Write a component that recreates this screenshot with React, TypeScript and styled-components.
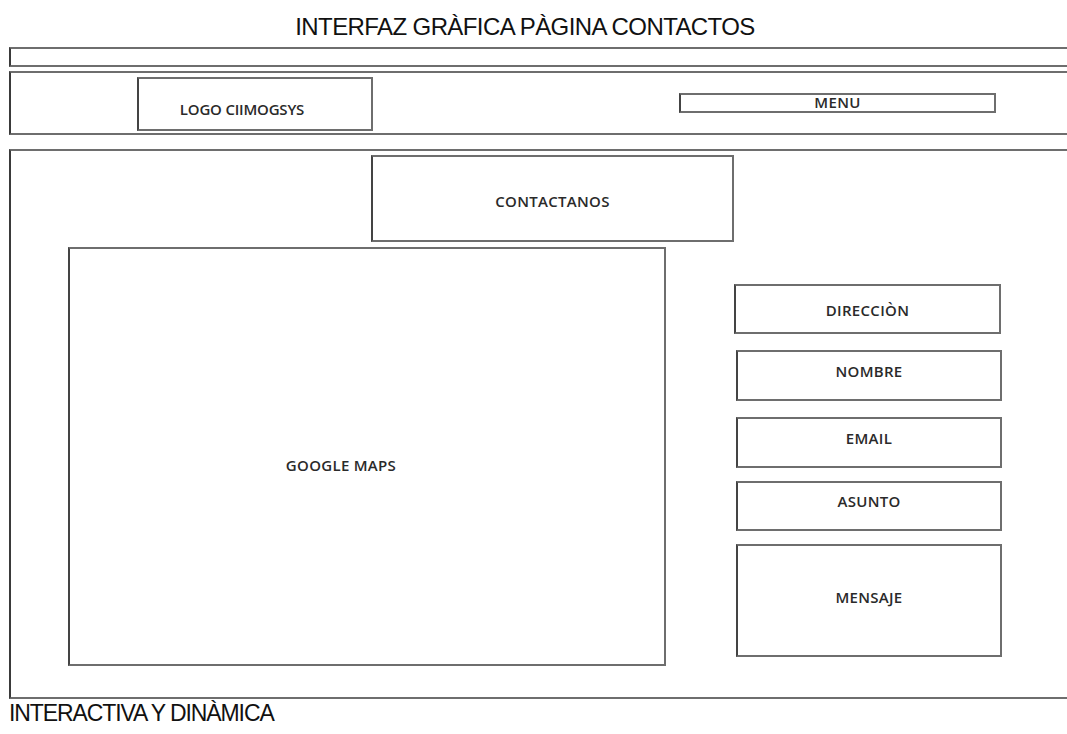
import React, { FC } from 'react';
import styled, { createGlobalStyle } from 'styled-components';

const GlobalStyle = createGlobalStyle`
  html, body {
    margin: 0;
    padding: 0;
    background: #ffffff;
    overflow: hidden;
  }
  body {
    font-family: "Open Sans", "Liberation Sans", sans-serif;
    color: #1a1a1a;
  }
`;

const line = '#6e6e6e';

const Page = styled.div`
  width: 1067px;
  height: 734px;
  padding: 13px 0 0 9px;
  box-sizing: border-box;
  display: flex;
  flex-direction: column;
`;

const Caption = styled.div<{ $center?: boolean }>`
  font-family: "Liberation Sans", sans-serif;
  font-size: ${(p) => (p.$center ? 24 : 23)}px;
  line-height: 28px;
  letter-spacing: ${(p) => (p.$center ? -0.6 : -1.1)}px;
  color: #111;
  white-space: nowrap;
  text-align: ${(p) => (p.$center ? 'center' : 'left')};
  width: ${(p) => (p.$center ? '1032px' : 'auto')};
`;

const Band = styled.div<{ $height: number; $gap: number }>`
  width: 1080px;
  height: ${(p) => p.$height}px;
  margin-top: ${(p) => p.$gap}px;
  border: 2px solid ${line};
  border-left-color: #3a3a3a;
  box-sizing: border-box;
  display: flex;
  align-items: flex-start;
`;

const Main = styled(Band)`
  flex-direction: column;
`;

const Frame = styled.div<{ $w: number; $h: number; $left?: number; $top?: number }>`
  width: ${(p) => p.$w}px;
  height: ${(p) => p.$h}px;
  margin-left: ${(p) => p.$left ?? 0}px;
  margin-top: ${(p) => p.$top ?? 0}px;
  border: 2px solid ${line};
  border-left-color: #444;
  box-sizing: border-box;
  display: flex;
  align-items: center;
  justify-content: center;
  flex-shrink: 0;
`;

const Label = styled.span<{ $shiftX?: number; $shiftY?: number }>`
  font-size: 15px;
  font-weight: 600;
  letter-spacing: 0.3px;
  color: #2a2a2a;
  white-space: nowrap;
  transform: translate(${(p) => p.$shiftX ?? 0}px, ${(p) => p.$shiftY ?? 0}px);
`;

const TightLabel = styled(Label)`
  letter-spacing: -0.2px;
`;

const ContentRow = styled.div`
  display: flex;
  align-items: flex-start;
  margin-top: 5px;
`;

const FormColumn = styled.div`
  display: flex;
  flex-direction: column;
  margin-left: 68px;
  margin-top: 37px;
`;

type Field = { label: string; h: number; gap: number; left: number; w: number; dy: number };

const fields: Field[] = [
  { label: 'DIRECCIÒN', h: 50, gap: 0, left: 0, w: 267, dy: 1 },
  { label: 'NOMBRE', h: 51, gap: 16, left: 2, w: 266, dy: -5 },
  { label: 'EMAIL', h: 51, gap: 16, left: 2, w: 266, dy: -5 },
  { label: 'ASUNTO', h: 50, gap: 13, left: 2, w: 266, dy: -5 },
  { label: 'MENSAJE', h: 113, gap: 13, left: 2, w: 266, dy: -4 },
];

const App: FC = () => {
  return (
    <>
      <GlobalStyle />
      <Page>
        <Caption $center>INTERFAZ GRÀFICA PÀGINA CONTACTOS</Caption>
        <Band $height={20} $gap={6} />
        <Band $height={64} $gap={4}>
          <Frame $w={236} $h={54} $left={126} $top={4}>
            <TightLabel $shiftX={-13} $shiftY={5}>LOGO CIIMOGSYS</TightLabel>
          </Frame>
          <Frame $w={317} $h={20} $left={306} $top={20}>
            <Label $shiftY={-1}>MENU</Label>
          </Frame>
        </Band>
        <Main $height={550} $gap={14}>
          <Frame $w={363} $h={87} $left={360} $top={4}>
            <Label $shiftY={2}>CONTACTANOS</Label>
          </Frame>
          <ContentRow>
            <Frame $w={598} $h={419} $left={57}>
              <Label $shiftX={-26} $shiftY={8}>GOOGLE MAPS</Label>
            </Frame>
            <FormColumn>
              {fields.map((f) => (
                <Frame key={f.label} $w={f.w} $h={f.h} $left={f.left} $top={f.gap}>
                  <Label $shiftY={f.dy}>{f.label}</Label>
                </Frame>
              ))}
            </FormColumn>
          </ContentRow>
        </Main>
        <Caption>INTERACTIVA Y DINÀMICA</Caption>
      </Page>
    </>
  );
};

export default App;
